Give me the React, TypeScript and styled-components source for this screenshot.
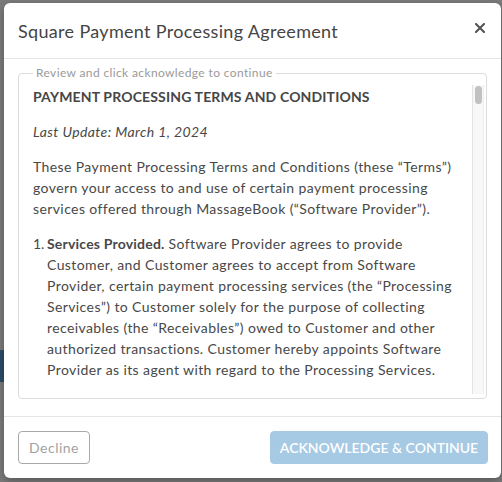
import React from "react";
import styled, { createGlobalStyle } from "styled-components";

const Global = createGlobalStyle`
  html, body { margin: 0; padding: 0; }
  body {
    width: 502px;
    height: 482px;
    overflow: hidden;
    background: #7b7b7b;
    font-family: Lato, "Liberation Sans", sans-serif;
  }
`;

const Backdrop = styled.div`
  position: relative;
  width: 502px;
  height: 482px;
  padding: 3px 0 0 4px;
  box-sizing: border-box;
`;

const BehindBlock = styled.div`
  position: absolute;
  left: 0;
  top: 350px;
  width: 4px;
  height: 32px;
  background: #2d4c68;
`;

const Modal = styled.div`
  position: relative;
  width: 497px;
  height: 475px;
  background: #fff;
  border-radius: 6px;
  box-shadow: 0 3px 9px rgba(0, 0, 0, 0.3);
  display: flex;
  flex-direction: column;
  overflow: hidden;
`;

const Header = styled.div`
  display: flex;
  align-items: center;
  justify-content: space-between;
  height: 55px;
  padding: 0 15px 0 14px;
  border-bottom: 1px solid #e5e5e5;
`;

const Title = styled.h4`
  margin: 0;
  font-size: 18px;
  font-weight: 400;
  color: #454545;
  letter-spacing: 0.33px;
`;

const Close = styled.button`
  border: 0;
  background: none;
  padding: 0;
  width: 12px;
  height: 12px;
  display: flex;
  align-items: center;
  justify-content: center;
  margin-top: -6px;
  cursor: pointer;
`;

const Body = styled.div`
  flex: 1;
  padding: 6px 14px 14px;
`;

const Fieldset = styled.fieldset`
  margin: 0;
  padding: 0 2px 4px 0;
  border: 1px solid #dcdcdc;
  border-radius: 4px;
`;

const Legend = styled.legend`
  margin-left: 14px;
  padding: 0 3px;
  font-size: 12px;
  line-height: 16px;
  color: #9a9a9a;
  letter-spacing: 0.37px;
`;

const Scroll = styled.div`
  display: flex;
  height: 309px;
  margin-top: 4px;
`;

const Content = styled.div`
  flex: 1;
  min-width: 0;
  overflow: hidden;
  padding: 1px 14px 0;
  color: #484848;
  font-size: 14px;
  line-height: 21px;
  letter-spacing: 0.4px;
`;

const Track = styled.div`
  width: 10px;
  flex: none;
  background: #f8f8f8;
  border-left: 1px solid #e4e4e4;
  border-right: 1px solid #eeeeee;
  display: flex;
  justify-content: center;
  padding-top: 1px;
`;

const Thumb = styled.div`
  width: 7px;
  height: 18px;
  margin-left: 1px;
  border-radius: 4px;
  background: #c1c1c1;
`;

const Heading = styled.h5`
  margin: 0 0 14px;
  font-size: 14px;
  font-weight: 700;
  color: #464646;
  line-height: 21px;
  letter-spacing: 0.15px;
`;

const Para = styled.p<{ $italic?: boolean }>`
  margin: 0 0 14px;
  font-style: ${(p) => (p.$italic ? "italic" : "normal")};
`;

const List = styled.ol`
  margin: 0;
  padding: 0;
  list-style: none;
`;

const Item = styled.li`
  display: grid;
  grid-template-columns: 14px 1fr;
  margin-bottom: 14px;
`;

const Num = styled.span`
  letter-spacing: 0;
`;

const Strong = styled.strong`
  font-weight: 700;
  letter-spacing: 0.2px;
`;

const Footer = styled.div`
  display: flex;
  justify-content: space-between;
  align-items: flex-start;
  height: 62px;
  padding: 14px 13px 0 14px;
  box-sizing: border-box;
  border-top: 1px solid #e5e5e5;
`;

const Button = styled.button<{ $primary?: boolean }>`
  height: 33px;
  padding: 0;
  border-radius: 4px;
  font-family: inherit;
  font-size: 14px;
  white-space: nowrap;
  cursor: pointer;
  border: 1px solid ${(p) => (p.$primary ? "#a6c9e4" : "#a9a9a9")};
  background: ${(p) => (p.$primary ? "#a6c9e4" : "#fff")};
  color: ${(p) => (p.$primary ? "#fff" : "#a2a2a2")};
  text-transform: ${(p) => (p.$primary ? "uppercase" : "none")};
  font-weight: ${(p) => (p.$primary ? 600 : 400)};
  letter-spacing: ${(p) => (p.$primary ? "0" : "0.5px")};
  width: ${(p) => (p.$primary ? "218px" : "72px")};
`;

export default function App() {
  return (
    <>
      <Global />
      <Backdrop>
        <BehindBlock />
        <Modal>
          <Header>
            <Title>Square Payment Processing Agreement</Title>
            <Close aria-label="Close">
              <svg width="10" height="10" viewBox="0 0 10 10">
                <path d="M1 1 L9 9 M9 1 L1 9" stroke="#555" strokeWidth="2.1" strokeLinecap="square" />
              </svg>
            </Close>
          </Header>
          <Body>
            <Fieldset>
              <Legend>Review and click acknowledge to continue</Legend>
              <Scroll>
                <Content>
                  <Heading>PAYMENT PROCESSING TERMS AND CONDITIONS</Heading>
                  <Para $italic>Last Update: March 1, 2024</Para>
                  <Para>
                    These Payment Processing Terms and Conditions (these “Terms”) govern your access to and use of
                    certain payment processing services offered through MassageBook (“Software Provider”).
                  </Para>
                  <List>
                    <Item>
                      <Num>1.</Num>
                      <span>
                        <Strong>Services Provided.</Strong> Software Provider agrees to provide Customer, and
                        Customer agrees to accept from Software Provider, certain payment processing services (the
                        “Processing Services”) to Customer solely for the purpose of collecting receivables (the
                        “Receivables”) owed to Customer and other authorized transactions. Customer hereby appoints
                        Software Provider as its agent with regard to the Processing Services.
                      </span>
                    </Item>
                  </List>
                </Content>
                <Track>
                  <Thumb />
                </Track>
              </Scroll>
            </Fieldset>
          </Body>
          <Footer>
            <Button>Decline</Button>
            <Button $primary>Acknowledge &amp; Continue</Button>
          </Footer>
        </Modal>
      </Backdrop>
    </>
  );
}
